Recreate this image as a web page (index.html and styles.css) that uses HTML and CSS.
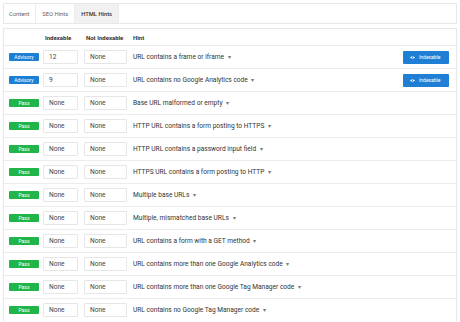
FILE: index.html
```html
<!DOCTYPE html>
<html lang="en">
<head>
    <meta charset="UTF-8">
    <title>HTML Hints</title>
    <link rel="stylesheet" href="styles.css">
</head>
<body>
    <div class="tabs">
        <div class="tab">Content</div>
        <div class="tab">SEO Hints</div>
        <div class="tab active">HTML Hints</div>
    </div>

    <div class="card">
        <div class="row head">
            <div></div>
            <div class="th">Indexable</div>
            <div class="th">Not Indexable</div>
            <div class="th">Hint</div>
            <div></div>
        </div>
        <div id="rows"></div>
    </div>

    <script>
        // hint rows
        const hints = [
            { status: 'Advisory', idx: '12', notIdx: 'None', text: 'URL contains a frame or iframe', action: true },
            { status: 'Advisory', idx: '9', notIdx: 'None', text: 'URL contains no Google Analytics code', action: true },
            { status: 'Pass', idx: 'None', notIdx: 'None', text: 'Base URL malformed or empty' },
            { status: 'Pass', idx: 'None', notIdx: 'None', text: 'HTTP URL contains a form posting to HTTPS' },
            { status: 'Pass', idx: 'None', notIdx: 'None', text: 'HTTP URL contains a password input field' },
            { status: 'Pass', idx: 'None', notIdx: 'None', text: 'HTTPS URL contains a form posting to HTTP' },
            { status: 'Pass', idx: 'None', notIdx: 'None', text: 'Multiple base URLs' },
            { status: 'Pass', idx: 'None', notIdx: 'None', text: 'Multiple, mismatched base URLs' },
            { status: 'Pass', idx: 'None', notIdx: 'None', text: 'URL contains a form with a GET method' },
            { status: 'Pass', idx: 'None', notIdx: 'None', text: 'URL contains more than one Google Analytics code' },
            { status: 'Pass', idx: 'None', notIdx: 'None', text: 'URL contains more than one Google Tag Manager code' },
            { status: 'Pass', idx: 'None', notIdx: 'None', text: 'URL contains no Google Tag Manager code' }
        ];

        const eye = `<svg class="eye" viewBox="0 0 10 6" width="5" height="3"><path d="M0 3C2 0 8 0 10 3C8 6 2 6 0 3Z" fill="#fff"/><circle cx="5" cy="3" r="1.3" fill="#1f7fd4"/></svg>`;

        document.getElementById('rows').innerHTML = hints.map(h => `
            <div class="row">
                <div><span class="badge ${h.status.toLowerCase()}">${h.status}</span></div>
                <div><div class="box">${h.idx}</div></div>
                <div><div class="box wide">${h.notIdx}</div></div>
                <div class="hint">${h.text} <span class="caret">&#9662;</span></div>
                <div>${h.action ? `<button class="btn">${eye}Indexable</button>` : ''}</div>
            </div>
        `).join('');
    </script>
</body>
</html>
```

FILE: styles.css
```css
body {
    margin: 0;
    padding: 3px 3px 0 3px;
    background: #fff;
    font-family: Roboto, "Liberation Sans", sans-serif;
    color: #333;
}

.tabs {
    display: flex;
    height: 19px;
    border: 1px solid #e8e8e8;
    background: #fff;
}

.tab {
    display: flex;
    align-items: center;
    padding: 0 6px;
    font-size: 5.8px;
    color: #666;
    border-right: 1px solid #ececec;
}

.tab:first-child {
    padding-left: 5px;
}

.tab.active {
    background: #f1f1f1;
    color: #333;
    font-weight: 500;
}

.card {
    margin-top: 4px;
    border: 1px solid #e8e8e8;
    border-bottom: none;
    background: #fff;
    box-shadow: 0 0 2px rgba(0,0,0,0.05);
}

.row {
    display: grid;
    grid-template-columns: 39px 41px 49px 1fr auto;
    align-items: center;
    height: 22px;
    border-top: 1px solid #ececec;
    padding-right: 7px;
    font-size: 6.6px;
}

.row.head {
    height: 16px;
    border-top: none;
}

.th {
    font-weight: 700;
    font-size: 6px;
    padding-left: 2px;
}

.th:nth-child(4) {
    padding-left: 0;
}

.badge {
    display: inline-flex;
    align-items: center;
    justify-content: center;
    margin-left: 5px;
    width: 30px;
    height: 8px;
    border-radius: 1px;
    color: #fff;
    font-size: 5px;
}

.badge.advisory {
    background: #1b7fd6;
}

.badge.pass {
    background: #20b548;
}

.box {
    width: 35px;
    height: 14px;
    box-sizing: border-box;
    border: 1px solid #e6e6e6;
    border-radius: 1px;
    display: flex;
    align-items: center;
    padding-left: 5px;
    color: #444;
}

.box.wide {
    width: 43px;
}

.hint {
    color: #333;
    white-space: nowrap;
}

.caret {
    font-size: 5.5px;
    color: #777;
    margin-left: 2px;
}

.btn {
    display: flex;
    align-items: center;
    gap: 4px;
    width: 46px;
    height: 13px;
    padding: 0 0 0 7px;
    border: none;
    border-radius: 1px;
    background: #1f7fd4;
    color: #fff;
    font-family: Roboto, "Liberation Sans", sans-serif;
    font-size: 5px;
}
```
